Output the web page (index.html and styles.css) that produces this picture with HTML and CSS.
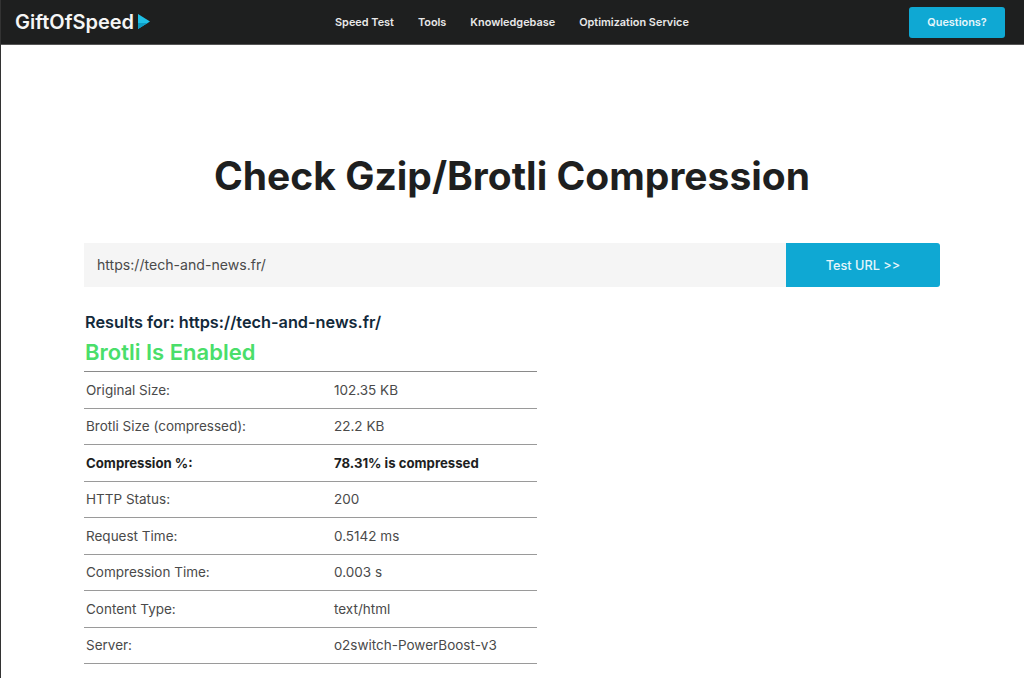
FILE: index.html
```html
<!DOCTYPE html>
<html lang="en">
<head>
    <meta charset="UTF-8">
    <title>Check Gzip/Brotli Compression</title>
    <link rel="stylesheet" href="styles.css">
</head>
<body>
    <header class="top-bar">
        <a class="logo" href="#">GiftOfSpeed<svg class="logo-arrow" width="12" height="15" viewBox="0 0 12 15"><path d="M0 0 L12 7.5 L0 15 Z" fill="#1fc0e6"/><path d="M0 9 L9.6 9 L0 15 Z" fill="#0d9cc4"/></svg></a>
        <nav class="main-nav">
            <a href="#">Speed Test</a>
            <a href="#">Tools</a>
            <a href="#">Knowledgebase</a>
            <a href="#">Optimization Service</a>
        </nav>
        <a class="questions-btn" href="#">Questions?</a>
    </header>

    <main class="content">
        <h1>Check Gzip/Brotli Compression</h1>

        <form class="test-form">
            <input class="url-input" type="text" value="https://tech-and-news.fr/">
            <button class="test-btn" type="button">Test URL &gt;&gt;</button>
        </form>

        <h2 class="results-for">Results for: https://tech-and-news.fr/</h2>
        <h3 class="results-status">Brotli Is Enabled</h3>

        <table class="results-table">
            <tr><td>Original Size:</td><td>102.35 KB</td></tr>
            <tr><td>Brotli Size (compressed):</td><td>22.2 KB</td></tr>
            <tr class="highlight"><td>Compression %:</td><td>78.31% is compressed</td></tr>
            <tr><td>HTTP Status:</td><td>200</td></tr>
            <tr><td>Request Time:</td><td>0.5142 ms</td></tr>
            <tr><td>Compression Time:</td><td>0.003 s</td></tr>
            <tr><td>Content Type:</td><td>text/html</td></tr>
            <tr><td>Server:</td><td>o2switch-PowerBoost-v3</td></tr>
        </table>
    </main>
</body>
</html>
```

FILE: styles.css
```css
* {
    margin: 0;
    padding: 0;
    box-sizing: border-box;
}

html, body {
    height: 100%;
    overflow: hidden;
}

body {
    font-family: 'Inter', 'Noto Sans', sans-serif;
    background: white;
    color: #4a4a4a;
    border-left: 1px solid #333;
}

a {
    text-decoration: none;
}

.top-bar {
    background: #1e1f1f;
    height: 45px;
    margin-left: -1px;
    display: flex;
    align-items: center;
    padding: 0 19px 0 15px;
    border-bottom: 1px solid #555;
}

.logo {
    color: #f5f5f5;
    font-size: 20px;
    font-weight: 600;
    width: 320px;
    display: flex;
    align-items: center;
}

.logo-arrow {
    margin: 0 0 2px 4px;
}

.main-nav {
    flex: 1;
    display: flex;
    gap: 24px;
}

.main-nav a {
    color: #e8e8e8;
    font-size: 10.9px;
    font-weight: 600;
}

.questions-btn {
    background: #0fa8d3;
    color: #e6f6fb;
    width: 96px;
    height: 31px;
    border-radius: 3px;
    font-size: 10.9px;
    font-weight: 600;
    display: flex;
    align-items: center;
    justify-content: center;
}

.content {
    padding: 109px 84px 0 83px;
}

h1 {
    color: #1e1f1f;
    font-size: 39px;
    font-weight: 700;
    line-height: 44px;
    text-align: center;
}

.test-form {
    display: flex;
    height: 44px;
    margin-top: 45px;
}

.url-input {
    flex: 1;
    background: #f5f5f5;
    border: none;
    padding: 0 12px 2px 13px;
    color: #4a4a4a;
    font-family: inherit;
    font-size: 14.1px;
}

.test-btn {
    width: 154px;
    background: #0fa8d3;
    color: #e6f6fb;
    border: none;
    border-radius: 0 3px 3px 0;
    font-family: inherit;
    font-size: 12.7px;
    font-weight: 500;
}

.results-for {
    color: #12293a;
    font-size: 16.3px;
    font-weight: 600;
    line-height: 24px;
    margin-top: 23px;
    padding-left: 1px;
    white-space: nowrap;
}

.results-status {
    color: #4ade6a;
    font-size: 22px;
    font-weight: 600;
    line-height: 30px;
    margin-top: 3px;
    padding-left: 1px;
}

.results-table {
    width: 453px;
    margin-top: 4px;
    border-collapse: collapse;
    border-top: 1px solid #8a8a8a;
    font-size: 13.5px;
}

.results-table td {
    height: 36.5px;
    border-bottom: 1px solid #9a9a9a;
}

.results-table td:first-child {
    width: 250px;
    padding-left: 2px;
}

.highlight td {
    color: #1e1f1f;
    font-size: 13.2px;
    font-weight: 700;
}
```
